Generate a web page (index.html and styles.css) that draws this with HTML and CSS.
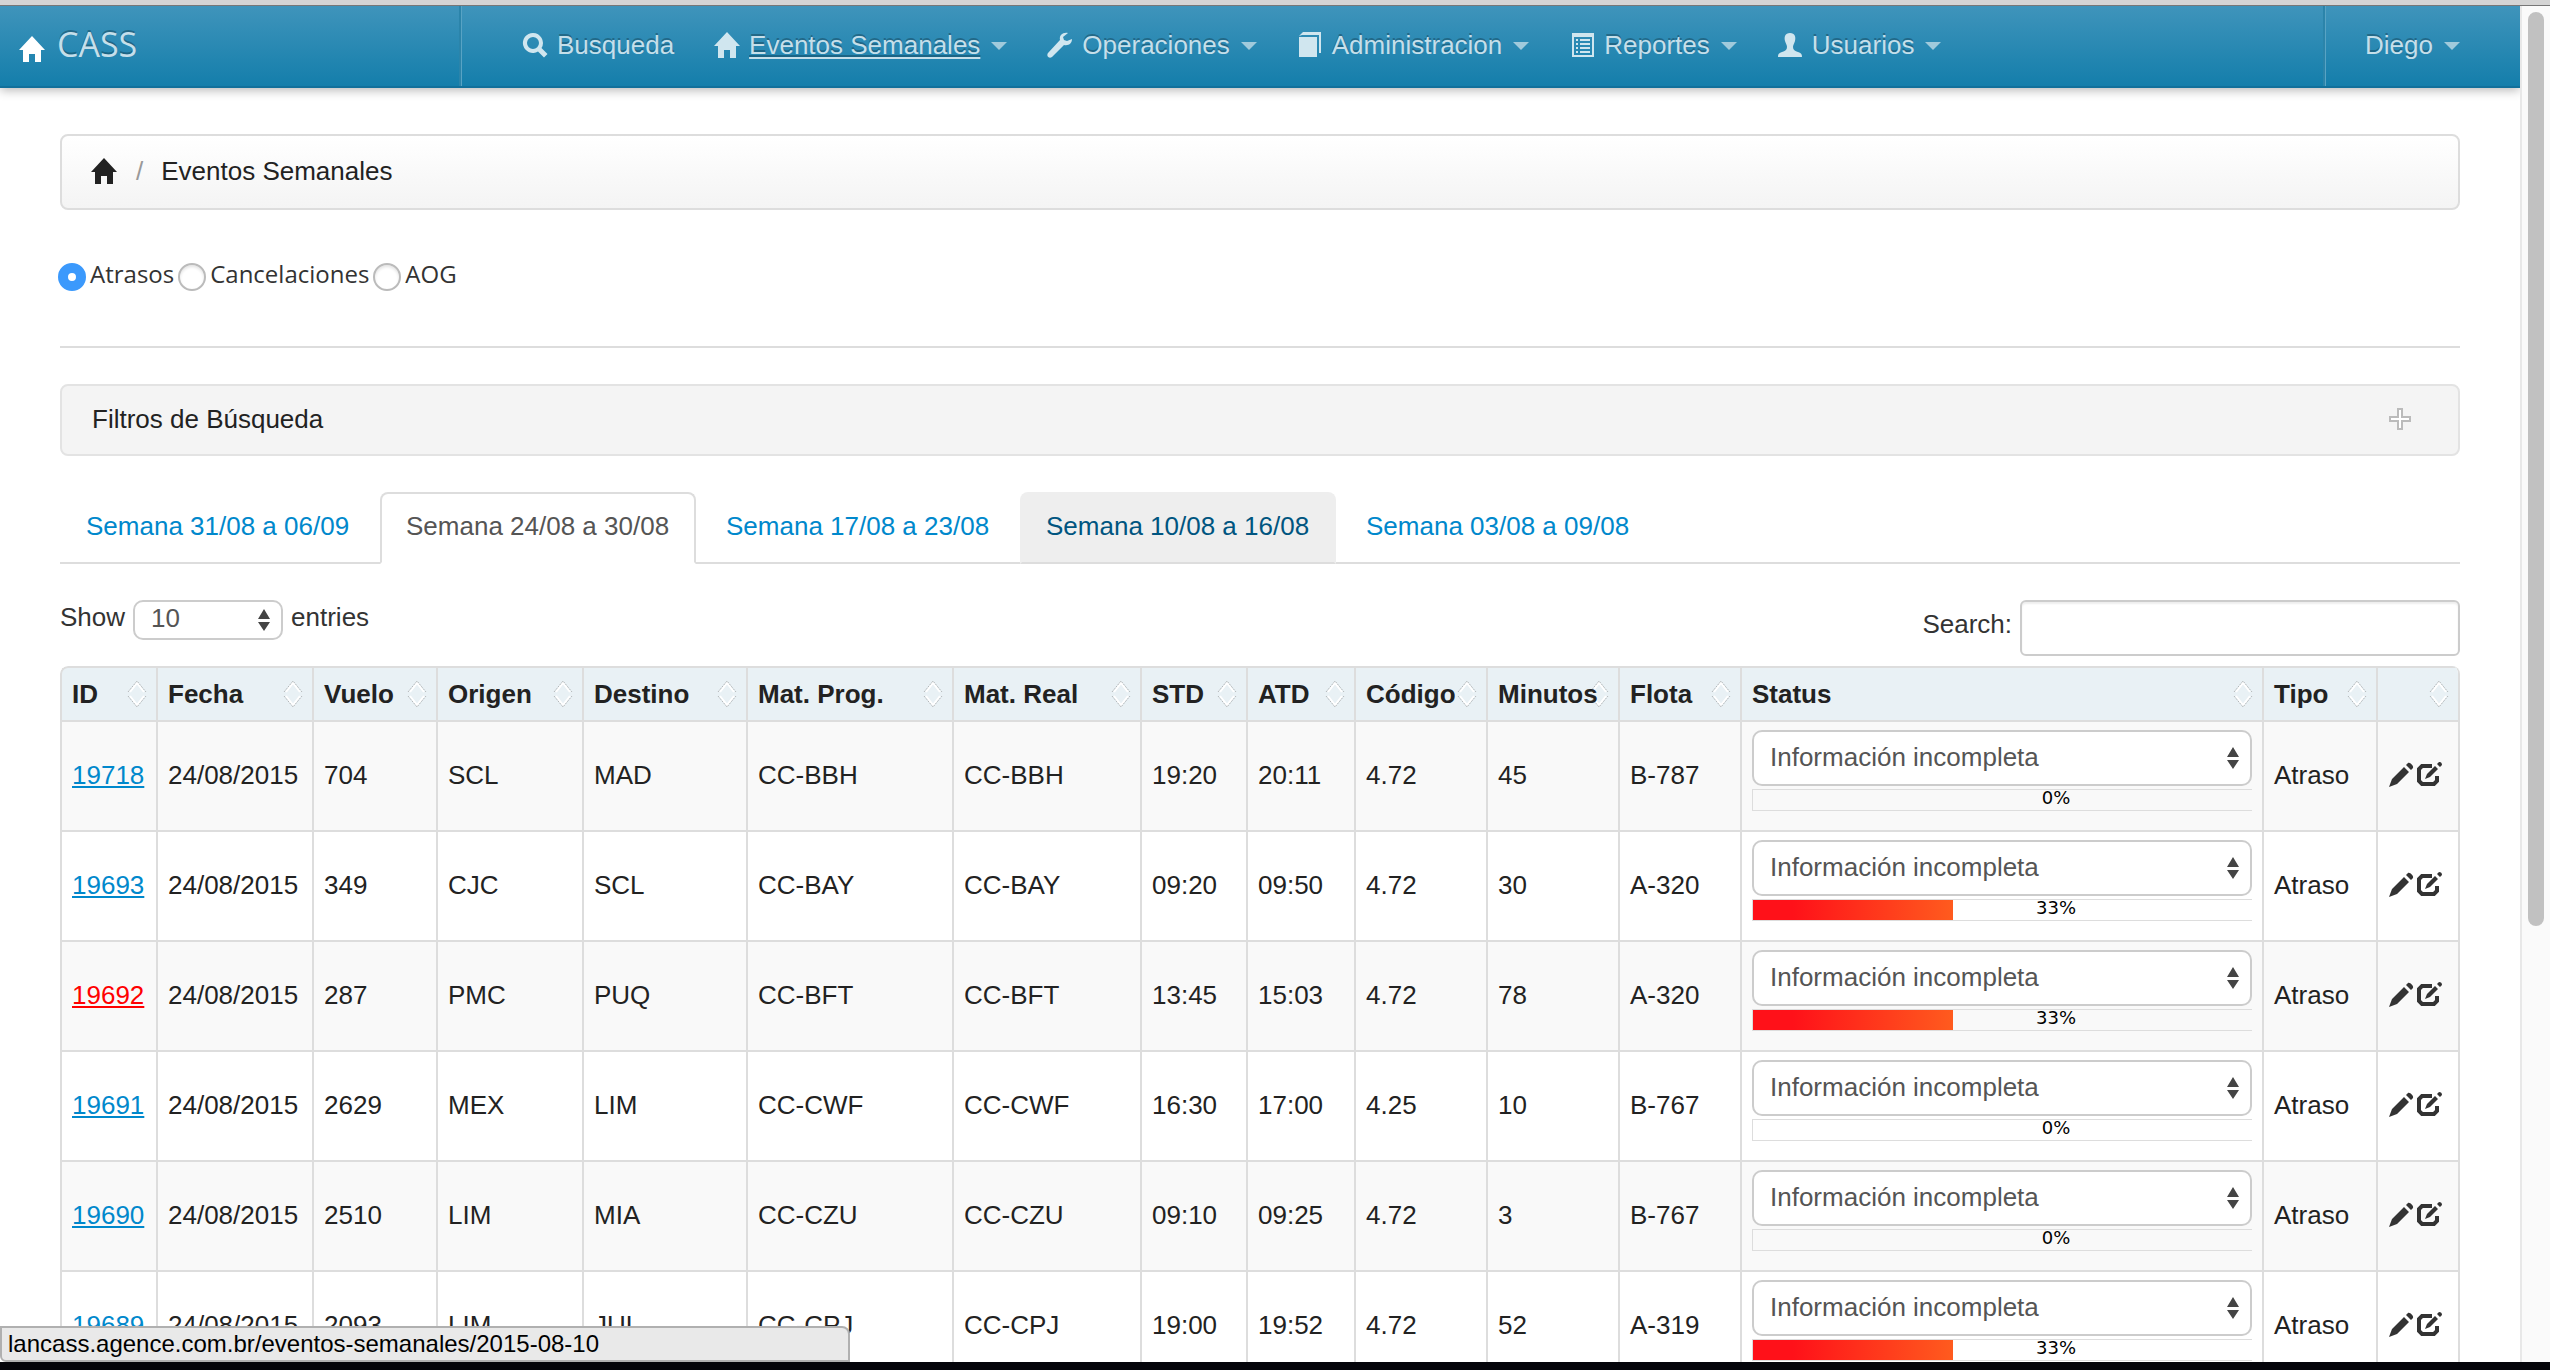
FILE: index.html
```
<!DOCTYPE html>
<html lang="es">
<head>
<meta charset="utf-8">
<title>CASS - Eventos Semanales</title>
<link rel="stylesheet" href="styles.css">
</head>
<body>
<svg class="sprite" aria-hidden="true">
  <symbol id="home" viewBox="0 0 28 28"><path d="M14 1 27 15h-4v12h-6v-8h-6v8H5V15H1z"/></symbol>
  <symbol id="search" viewBox="0 0 28 28"><path fill-rule="evenodd" d="M12 2a10 10 0 1 0 5 18.600l6 6 3.500-3.500-6-6A10 10 0 0 0 12 2zm0 4a6 6 0 1 1 0 12 6 6 0 0 1 0-12z"/></symbol>
  <symbol id="wrench" viewBox="0 0 28 28"><path d="M22 2c-5-1-9 2-8 7L2 22c-2 3 1 6 4 4l12-12c5 1 8-2 8-6l-5 2-3-1-1-3z"/></symbol>
  <symbol id="book" viewBox="0 0 28 28"><path d="M3 6h18v20H3zM3 5l4-4h18v21h-2V4H6z"/></symbol>
  <symbol id="list" viewBox="0 0 28 28"><path fill-rule="evenodd" d="M4 2h22v24H4zm2 4v18h18V6zm2 2h2v2H8zm4 0h10v2H12zm-4 4h2v2H8zm4 0h10v2H12zm-4 4h2v2H8zm4 0h10v2H12zm-4 4h2v2H8zm4 0h10v2H12z"/></symbol>
  <symbol id="user" viewBox="0 0 28 28"><path d="M14 2c5 0 6 4 5 8-1 3-2 4-2 6 0 3 2 4 5 5 3 1 4 2 4 5H2c0-3 1-4 4-5 3-1 5-2 5-5 0-2-1-3-2-6-1-4 0-8 5-8z"/></symbol>
  <symbol id="plus" viewBox="0 0 28 28"><path fill="#fff" stroke="#bbb" stroke-width="2" d="M12 4h4v8h8v4h-8v8h-4v-8H4v-4h8z"/></symbol>
  <symbol id="sort" viewBox="0 0 20 28"><g fill="none"><path stroke="#fff" stroke-width="2" d="m3 12 7-9 7 9M3 16l7 9 7-9"/><path stroke="#b4b8ba" stroke-dasharray="2 1" d="M1 12 10 1l9 11M1 16l9 11 9-11"/></g></symbol>
  <symbol id="updown" viewBox="0 0 12 24"><path d="M6 1l6 10H0zM6 23l6-9H0z"/></symbol>
  <symbol id="pencil" viewBox="0 0 28 28"><path d="M1 26l3-8L16 6l5 5L9 23zM18 4l2-2c2-1 6 3 5 5l-2 2z"/></symbol>
  <symbol id="edit" viewBox="0 0 28 28"><path fill="none" stroke="currentColor" stroke-width="4" d="M16 5H6L3 8v12l3 3h12l3-3v-5"/><path d="M9 18l2-5 8-8 3 3-8 8zM21 3l2-2c2 0 3 1 3 3l-2 2z"/></symbol>
</svg>

<div class="chrome-edge"></div>
<div class="window">
  <main class="page">
    <header class="navbar">
      <a class="brand" href="#"><svg class="icon"><use href="#home"/></svg>CASS</a>
      <nav class="menu">
        <a href="#"><svg class="icon"><use href="#search"/></svg><span>Busqueda</span></a>
        <a class="current" href="#"><svg class="icon"><use href="#home"/></svg><span>Eventos Semanales</span><i class="caret"></i></a>
        <a href="#"><svg class="icon"><use href="#wrench"/></svg><span>Operaciones</span><i class="caret"></i></a>
        <a href="#"><svg class="icon"><use href="#book"/></svg><span>Administracion</span><i class="caret"></i></a>
        <a href="#"><svg class="icon"><use href="#list"/></svg><span>Reportes</span><i class="caret"></i></a>
        <a href="#"><svg class="icon"><use href="#user"/></svg><span>Usuarios</span><i class="caret"></i></a>
      </nav>
      <a class="account" href="#"><span>Diego</span><i class="caret"></i></a>
    </header>

    <div class="content">
      <div class="breadcrumb"><a href="#" aria-label="Inicio"><svg class="icon"><use href="#home"/></svg></a><span class="divider">/</span><span>Eventos Semanales</span></div>

      <form class="kinds">
        <input type="radio" name="kind" id="k1" checked><label for="k1">Atrasos</label>
        <input type="radio" name="kind" id="k2"><label for="k2">Cancelaciones</label>
        <input type="radio" name="kind" id="k3"><label for="k3">AOG</label>
      </form>

      <hr class="rule">

      <button class="filters" type="button"><span>Filtros de Búsqueda</span><svg class="icon"><use href="#plus"/></svg></button>

      <nav class="tabs">
        <a href="#">Semana 31/08 a 06/09</a>
        <a class="active" href="#">Semana 24/08 a 30/08</a>
        <a href="#">Semana 17/08 a 23/08</a>
        <a class="hover" href="#">Semana 10/08 a 16/08</a>
        <a href="#">Semana 03/08 a 09/08</a>
      </nav>

      <div class="controls">
        <div class="length"><label for="len">Show</label><span class="select small"><select id="len"><option>10</option></select><svg class="arrows"><use href="#updown"/></svg></span><span>entries</span></div>
        <div class="search"><label for="q">Search:</label><input type="text" id="q"></div>
      </div>

      <table class="events">
        <colgroup><col class="w96"><col class="w156"><col class="w124"><col class="w146"><col class="w164"><col class="w206"><col class="w188"><col class="w106"><col class="w108"><col class="w132"><col class="w132"><col class="w122"><col><col class="w114"><col class="w82"></colgroup>
        <thead>
          <tr>
            <th>ID<svg class="sort"><use href="#sort"/></svg></th>
            <th>Fecha<svg class="sort"><use href="#sort"/></svg></th>
            <th>Vuelo<svg class="sort"><use href="#sort"/></svg></th>
            <th>Origen<svg class="sort"><use href="#sort"/></svg></th>
            <th>Destino<svg class="sort"><use href="#sort"/></svg></th>
            <th>Mat. Prog.<svg class="sort"><use href="#sort"/></svg></th>
            <th>Mat. Real<svg class="sort"><use href="#sort"/></svg></th>
            <th>STD<svg class="sort"><use href="#sort"/></svg></th>
            <th>ATD<svg class="sort"><use href="#sort"/></svg></th>
            <th>Código<svg class="sort"><use href="#sort"/></svg></th>
            <th>Minutos<svg class="sort"><use href="#sort"/></svg></th>
            <th>Flota<svg class="sort"><use href="#sort"/></svg></th>
            <th>Status<svg class="sort"><use href="#sort"/></svg></th>
            <th>Tipo<svg class="sort"><use href="#sort"/></svg></th>
            <th><svg class="sort"><use href="#sort"/></svg></th>
          </tr>
        </thead>
        <tbody>
          <tr><td><a href="#">19718</a></td><td>24/08/2015</td><td>704</td><td>SCL</td><td>MAD</td><td>CC-BBH</td><td>CC-BBH</td><td>19:20</td><td>20:11</td><td>4.72</td><td>45</td><td>B-787</td>
            <td class="status"><span class="select"><select aria-label="Status 19718"><option>Información incompleta</option></select><svg class="arrows"><use href="#updown"/></svg></span><div class="clip"><div class="progress"><span>0%</span></div></div></td>
            <td>Atraso</td><td class="actions"><a href="#" aria-label="Editar"><svg class="icon"><use href="#pencil"/></svg></a><a href="#" aria-label="Abrir"><svg class="icon"><use href="#edit"/></svg></a></td></tr>
          <tr><td><a href="#">19693</a></td><td>24/08/2015</td><td>349</td><td>CJC</td><td>SCL</td><td>CC-BAY</td><td>CC-BAY</td><td>09:20</td><td>09:50</td><td>4.72</td><td>30</td><td>A-320</td>
            <td class="status"><span class="select"><select aria-label="Status 19693"><option>Información incompleta</option></select><svg class="arrows"><use href="#updown"/></svg></span><div class="clip"><div class="progress"><div class="fill" style="width:33%"></div><span>33%</span></div></div></td>
            <td>Atraso</td><td class="actions"><a href="#" aria-label="Editar"><svg class="icon"><use href="#pencil"/></svg></a><a href="#" aria-label="Abrir"><svg class="icon"><use href="#edit"/></svg></a></td></tr>
          <tr><td><a class="alert" href="#">19692</a></td><td>24/08/2015</td><td>287</td><td>PMC</td><td>PUQ</td><td>CC-BFT</td><td>CC-BFT</td><td>13:45</td><td>15:03</td><td>4.72</td><td>78</td><td>A-320</td>
            <td class="status"><span class="select"><select aria-label="Status 19692"><option>Información incompleta</option></select><svg class="arrows"><use href="#updown"/></svg></span><div class="clip"><div class="progress"><div class="fill" style="width:33%"></div><span>33%</span></div></div></td>
            <td>Atraso</td><td class="actions"><a href="#" aria-label="Editar"><svg class="icon"><use href="#pencil"/></svg></a><a href="#" aria-label="Abrir"><svg class="icon"><use href="#edit"/></svg></a></td></tr>
          <tr><td><a href="#">19691</a></td><td>24/08/2015</td><td>2629</td><td>MEX</td><td>LIM</td><td>CC-CWF</td><td>CC-CWF</td><td>16:30</td><td>17:00</td><td>4.25</td><td>10</td><td>B-767</td>
            <td class="status"><span class="select"><select aria-label="Status 19691"><option>Información incompleta</option></select><svg class="arrows"><use href="#updown"/></svg></span><div class="clip"><div class="progress"><span>0%</span></div></div></td>
            <td>Atraso</td><td class="actions"><a href="#" aria-label="Editar"><svg class="icon"><use href="#pencil"/></svg></a><a href="#" aria-label="Abrir"><svg class="icon"><use href="#edit"/></svg></a></td></tr>
          <tr><td><a href="#">19690</a></td><td>24/08/2015</td><td>2510</td><td>LIM</td><td>MIA</td><td>CC-CZU</td><td>CC-CZU</td><td>09:10</td><td>09:25</td><td>4.72</td><td>3</td><td>B-767</td>
            <td class="status"><span class="select"><select aria-label="Status 19690"><option>Información incompleta</option></select><svg class="arrows"><use href="#updown"/></svg></span><div class="clip"><div class="progress"><span>0%</span></div></div></td>
            <td>Atraso</td><td class="actions"><a href="#" aria-label="Editar"><svg class="icon"><use href="#pencil"/></svg></a><a href="#" aria-label="Abrir"><svg class="icon"><use href="#edit"/></svg></a></td></tr>
          <tr><td><a href="#">19689</a></td><td>24/08/2015</td><td>2093</td><td>LIM</td><td>JUL</td><td>CC-CPJ</td><td>CC-CPJ</td><td>19:00</td><td>19:52</td><td>4.72</td><td>52</td><td>A-319</td>
            <td class="status"><span class="select"><select aria-label="Status 19689"><option>Información incompleta</option></select><svg class="arrows"><use href="#updown"/></svg></span><div class="clip"><div class="progress"><div class="fill" style="width:33%"></div><span>33%</span></div></div></td>
            <td>Atraso</td><td class="actions"><a href="#" aria-label="Editar"><svg class="icon"><use href="#pencil"/></svg></a><a href="#" aria-label="Abrir"><svg class="icon"><use href="#edit"/></svg></a></td></tr>
        </tbody>
      </table>
    </div>
  </main>
  <div class="scrollbar"><div class="thumb"></div></div>
</div>
<div class="link-bubble">lancass.agence.com.br/eventos-semanales/2015-08-10</div>
<div class="desktop-edge"></div>
</body>
</html>
```
FILE: styles.css
```
* { box-sizing: border-box; }
body {
  margin: 0;
  height: 100vh;
  display: flex;
  flex-direction: column;
  overflow: hidden;
  background: #fff;
  color: #222;
  font: 26px/40px "Liberation Sans", Arial, sans-serif;
}
a { color: #08c; }
.sprite { position: absolute; width: 0; height: 0; }
.icon { width: 28px; height: 28px; fill: currentColor; flex: none; }

/* window frame */
.chrome-edge { flex: none; height: 6px; background: #d4d4d4; border-bottom: 1px solid #777; }
.desktop-edge { flex: none; height: 8px; background: #05050a; }
.window { flex: 1; min-height: 0; display: flex; }
.page { flex: 1; min-width: 0; overflow: hidden; }
.scrollbar { flex: none; width: 30px; padding: 6px; background: #fafafa; border-left: 2px solid #e8e8e8; }
.thumb { width: 16px; height: 68%; border-radius: 8px; background: #c1c1c1; }
.link-bubble {
  position: fixed;
  left: 0;
  bottom: 8px;
  width: 850px;
  height: 36px;
  padding: 0 6px;
  border: 2px solid #b0b0b0;
  border-radius: 0 8px 0 6px;
  background: #e9e9e9;
  color: #000;
  font-size: 24px;
  line-height: 32px;
}

/* navigation */
.navbar {
  position: relative;
  display: flex;
  height: 82px;
  border-bottom: 2px solid #11709b;
  background: linear-gradient(#3f94bb, #147eab);
  box-shadow: 0 2px 10px rgba(0, 0, 0, .3);
}
.navbar a { color: #c5dfea; text-decoration: none; text-shadow: 0 -2px 0 rgba(0, 0, 0, .25); }
.brand {
  display: flex;
  align-items: center;
  gap: 11px;
  width: 461px;
  padding: 0 0 4px 18px;
  border-right: 2px solid #2b84aa;
  font: 34px/40px "Open Sans", sans-serif;
}
.brand .icon { color: #fff; margin-top: 10px; }
.menu { flex: 1; display: flex; gap: 39px; padding: 0 0 0 59px; border-left: 1px solid #58a3c4; }
.menu a, .account { display: flex; align-items: center; padding-bottom: 2px; }
.menu .icon { margin-right: 8px; color: #d0e6ef; }
.current span { text-decoration: underline; text-underline-offset: 3px; text-decoration-thickness: 2px; }
.caret { margin: 2px 0 0 11px; border: 8px solid transparent; border-top-color: #a0cadc; border-bottom: 0; }
.account { padding-left: 40px; width: 197px; border-left: 2px solid #2b84aa; box-shadow: inset 1px 0 #58a3c4; }

/* page body */
.content { padding: 46px 60px 0; }
.breadcrumb {
  display: flex;
  align-items: center;
  height: 76px;
  padding: 0 28px 2px;
  border: 2px solid #ddd;
  border-radius: 8px;
  background: linear-gradient(#fff, #f4f4f4);
}
.breadcrumb a { display: flex; color: #222; }
.divider { margin: 0 18px; color: #999; }
.kinds { display: flex; align-items: center; margin: 44px 0 50px; font: 24px/40px "Open Sans", sans-serif; color: #333; }
.kinds input {
  appearance: none;
  width: 28px;
  height: 28px;
  margin: 4px 4px 0 -2px;
  border: 2px solid #bbb;
  border-radius: 50%;
  background: #fff;
  box-shadow: inset 0 2px 3px #e4e4e4;
}
.kinds input:checked { border: 10px solid #3b99fc; box-shadow: none; }
.kinds label { height: 42px; margin-right: 6px; }
.rule { height: 2px; margin: 0 0 36px; border: 0; background: #ddd; }
.filters {
  display: flex;
  align-items: center;
  justify-content: space-between;
  width: 100%;
  height: 72px;
  padding: 0 44px 2px 30px;
  border: 2px solid #e3e3e3;
  border-radius: 8px;
  background: #f4f4f4;
  color: #222;
  font: inherit;
}
.tabs { display: flex; gap: 4px; height: 72px; margin: 36px 0; border-bottom: 2px solid #ddd; }
.tabs a { min-width: 316px; height: 72px; padding: 12px 24px; border: 2px solid transparent; border-radius: 8px 8px 0 0; text-decoration: none; }
.tabs .active { border-color: #ddd; border-bottom-color: #fff; background: #fff; color: #555; }
.tabs .hover { background: #eee; border-color: #eee #eee #ddd; color: #005580; }

/* table controls */
.controls { display: flex; justify-content: space-between; height: 56px; margin-bottom: 10px; color: #333; }
.length { display: flex; align-items: center; gap: 8px; height: 34px; }
.search { display: flex; align-items: center; gap: 8px; }
.search label { padding-bottom: 8px; }
.search input { width: 440px; height: 56px; border: 2px solid #ccc; border-radius: 6px; box-shadow: inset 0 2px 2px #eee; font: inherit; }
.select { position: relative; display: block; height: 56px; }
.select select {
  appearance: none;
  display: block;
  width: 100%;
  height: 100%;
  padding: 0 16px 2px;
  border: 2px solid #ccc;
  border-radius: 10px;
  background: #fff;
  color: #555;
  font: inherit;
}
.arrows { position: absolute; right: 13px; top: 50%; width: 12px; height: 24px; margin-top: -12px; fill: #444; }
.small { width: 150px; height: 40px; margin-top: 6px; }
.small select { padding-bottom: 4px; line-height: 30px; }

/* events */
.events { width: 100%; table-layout: fixed; border-collapse: separate; border-spacing: 0; border: solid #ddd; border-width: 0 2px 0 0; border-radius: 8px 8px 0 0; overflow: hidden; }
.w82 { width: 82px; }
.w96 { width: 96px; }
.w106 { width: 106px; }
.w108 { width: 108px; }
.w114 { width: 114px; }
.w122 { width: 122px; }
.w124 { width: 124px; }
.w132 { width: 132px; }
.w146 { width: 146px; }
.w156 { width: 156px; }
.w164 { width: 164px; }
.w188 { width: 188px; }
.w206 { width: 206px; }
.events th, .events td { padding: 0 0 0 10px; border: solid #ddd; border-width: 2px 0 0 2px; text-align: left; white-space: nowrap; }
.events th { position: relative; isolation: isolate; height: 54px; background: #e9f1f5; line-height: 36px; }
.events th:first-child { border-top-left-radius: 8px; }
.sort { position: absolute; z-index: -1; right: 9px; top: 12px; width: 20px; height: 28px; }
.events td { height: 110px; padding-bottom: 3px; }
.events tbody tr:nth-child(odd) { background: #f9f9f9; }
.events .alert { color: #f00; }
.events .status { padding: 8px 10px 0; vertical-align: top; }
.events .actions { line-height: 28px; }
.events .actions a { display: inline-block; height: 28px; color: #333; vertical-align: bottom; }
.clip { overflow: hidden; margin-top: 3px; }
.progress { position: relative; width: calc(100% + 108px); height: 22px; border: 1px solid #ddd; }
.fill { height: 20px; background: linear-gradient(90deg, #ff1119 20%, #ff5b1e); }
.progress span { position: absolute; inset: 0; text-align: center; color: #000; font: 18px/16px "DejaVu Sans", sans-serif; }
```
